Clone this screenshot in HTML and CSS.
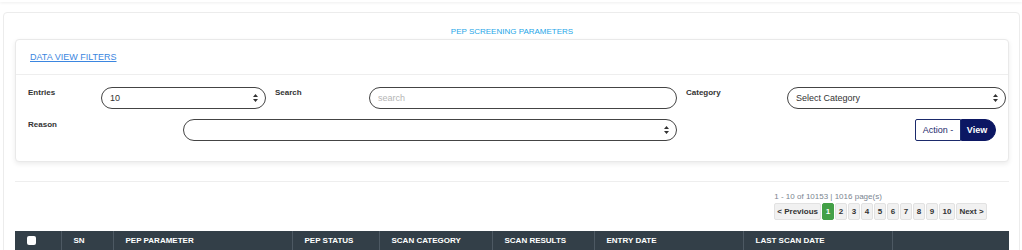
FILE: index.html
```html
<!DOCTYPE html>
<html lang="en">
<head>
    <meta charset="UTF-8">
    <meta name="viewport" content="width=device-width, initial-scale=1.0">
    <title>PEP Screening Parameters</title>
    <link rel="stylesheet" href="styles.css">
</head>
<body>
    <div class="topbar"></div>
    <div class="page">
        <div class="panel">
            <h2 class="panel-title">PEP SCREENING PARAMETERS</h2>

            <div class="filters">
                <div class="filters-head">
                    <a href="#" class="filters-link">DATA VIEW FILTERS</a>
                </div>
                <div class="filters-body">
                    <div class="row row-top">
                        <label class="lbl">Entries</label>
                        <div class="field">
                            <select class="ctl">
                                <option>10</option>
                                <option>25</option>
                                <option>50</option>
                            </select>
                            <svg class="caret" width="5" height="8" viewBox="0 0 5 8"><path d="M0 3 L2.5 0 L5 3 Z M0 5 L2.5 8 L5 5 Z" fill="#333"/></svg>
                        </div>
                        <label class="lbl lbl-pad">Search</label>
                        <div class="field">
                            <input class="ctl" type="text" placeholder="search">
                        </div>
                        <label class="lbl lbl-pad">Category</label>
                        <div class="field">
                            <select class="ctl">
                                <option>Select Category</option>
                            </select>
                            <svg class="caret" width="5" height="8" viewBox="0 0 5 8"><path d="M0 3 L2.5 0 L5 3 Z M0 5 L2.5 8 L5 5 Z" fill="#333"/></svg>
                        </div>
                    </div>
                    <div class="row row-bottom">
                        <label class="lbl">Reason</label>
                        <div class="field">
                            <select class="ctl">
                                <option></option>
                            </select>
                            <svg class="caret" width="5" height="8" viewBox="0 0 5 8"><path d="M0 3 L2.5 0 L5 3 Z M0 5 L2.5 8 L5 5 Z" fill="#333"/></svg>
                        </div>
                        <div></div>
                        <div class="btn-group">
                            <button class="btn-action">Action -</button>
                            <button class="btn-view">View</button>
                        </div>
                    </div>
                </div>
            </div>

            <hr class="divider">

            <div class="pager-wrap">
                <div class="pager">
                    <div class="pager-info">1 - 10 of 10153 | 1016 page(s)</div>
                    <div class="pager-btns">
                        <button class="pg">&lt; Previous</button>
                        <button class="pg active">1</button>
                        <button class="pg">2</button>
                        <button class="pg">3</button>
                        <button class="pg">4</button>
                        <button class="pg">5</button>
                        <button class="pg">6</button>
                        <button class="pg">7</button>
                        <button class="pg">8</button>
                        <button class="pg">9</button>
                        <button class="pg">10</button>
                        <button class="pg">Next &gt;</button>
                    </div>
                </div>
            </div>

            <table class="grid">
                <thead>
                    <tr>
                        <th class="c-check"><span class="chk"></span></th>
                        <th class="c-sn">SN</th>
                        <th class="c-param">PEP PARAMETER</th>
                        <th class="c-status">PEP STATUS</th>
                        <th class="c-cat">SCAN CATEGORY</th>
                        <th class="c-res">SCAN RESULTS</th>
                        <th class="c-entry">ENTRY DATE</th>
                        <th class="c-last">LAST SCAN DATE</th>
                        <th class="c-act"></th>
                    </tr>
                </thead>
            </table>
        </div>
    </div>
</body>
</html>
```

FILE: styles.css
```css
body {
    margin: 0;
    font-family: 'Liberation Sans', Arial, sans-serif;
    background-color: #fff;
    color: #333;
}
.topbar {
    height: 2px;
    background-color: #fff;
    box-shadow: 0 1px 3px rgba(0, 0, 0, 0.08);
}
.page {
    padding: 10px 2px 0 3px;
    height: 238px;
    overflow: hidden;
}
.panel {
    border: 1px solid #ececec;
    border-radius: 4px;
    padding: 0 10px 0 11px;
    height: 300px;
}
.panel-title {
    margin: 0;
    padding: 14px 0 2px;
    font-size: 8px;
    line-height: 10px;
    font-weight: normal;
    text-align: center;
    color: #1ea6e8;
}
.filters {
    border: 1px solid #e9e9e9;
    border-radius: 4px;
    box-shadow: 0 2px 5px rgba(0, 0, 0, 0.08);
    background-color: #fff;
}
.filters-head {
    padding: 11px 15px 11px 14px;
    font-size: 9px;
    line-height: 12px;
    border-bottom: 1px solid #eee;
}
.filters-link {
    font-size: 9px;
    color: #3b86e0;
    text-decoration: underline;
}
.filters-body {
    padding: 12px 2px 20px 12px;
    display: flex;
    flex-direction: column;
    gap: 10px;
}
.row {
    display: grid;
    align-items: start;
}
.row-top {
    grid-template-columns: 73px 165px 103px 308px 110px 1fr;
}
.row-bottom {
    grid-template-columns: 155px 494px 1fr auto;
}
.lbl {
    font-size: 8px;
    font-weight: bold;
    line-height: 10px;
    padding-top: 1px;
    color: #333;
}
.lbl-pad {
    padding-left: 9px;
}
.field {
    position: relative;
    height: 22px;
}
.ctl {
    appearance: none;
    -webkit-appearance: none;
    box-sizing: border-box;
    width: 100%;
    height: 22px;
    border: 1px solid #444;
    border-radius: 11px;
    background-color: #fff;
    padding: 0 20px 0 8px;
    font-family: 'Liberation Sans', Arial, sans-serif;
    font-size: 9px;
    color: #333;
    outline: none;
}
.ctl::placeholder {
    color: #b5b5b5;
}
.caret {
    position: absolute;
    right: 8px;
    top: 7px;
    pointer-events: none;
}
.btn-group {
    display: flex;
    margin-right: 10px;
}
.btn-group button {
    height: 22px;
    font-family: 'Liberation Sans', Arial, sans-serif;
    font-size: 9px;
    cursor: pointer;
}
.btn-action {
    width: 46px;
    padding: 0;
    background-color: #fff;
    color: #1b2a6b;
    border: 1px solid #1b2a6b;
    border-radius: 2px 0 0 2px;
}
.btn-view {
    width: 35px;
    padding: 0 3px 0 0;
    background-color: #0c1763;
    color: #fff;
    font-weight: bold;
    border: 1px solid #0c1763;
    border-radius: 0 11px 11px 0;
}
.divider {
    margin: 19px 0 0 0;
    border: none;
    border-top: 1px solid #eee;
}
.pager-wrap {
    display: flex;
    justify-content: flex-end;
    padding: 10px 22px 0 0;
}
.pager-info {
    font-size: 8px;
    line-height: 10px;
    color: #7a8590;
    margin-bottom: 1px;
}
.pager-btns {
    display: flex;
    gap: 1px;
}
.pg {
    box-sizing: border-box;
    height: 17px;
    min-width: 12px;
    padding: 0 2px;
    font-family: 'Liberation Sans', Arial, sans-serif;
    font-size: 8px;
    font-weight: bold;
    color: #333;
    background-color: #f1f1f1;
    border: 1px solid #e2e2e2;
    border-radius: 2px;
}
.pg:first-child {
    min-width: 46px;
}
.pg:nth-last-child(2) {
    min-width: 16px;
}
.pg:last-child {
    min-width: 31px;
}
.pg.active {
    background-color: #43a047;
    border-color: #43a047;
    color: #fff;
}
.grid {
    margin-top: 11px;
    width: 994px;
    border-collapse: collapse;
    table-layout: fixed;
}
.grid th {
    box-sizing: border-box;
    background-color: #333f48;
    color: #fff;
    font-size: 8px;
    font-weight: bold;
    text-align: left;
    padding: 5px 12px 7px;
    line-height: 10px;
    border-left: 1px solid #4d5963;
    white-space: nowrap;
}
.grid th:first-child {
    border-left: none;
}
.c-check { width: 46px; }
.c-sn { width: 52px; }
.c-param { width: 179px; }
.c-status { width: 87px; }
.c-cat { width: 113px; }
.c-res { width: 102px; }
.c-entry { width: 149px; }
.c-last { width: 149px; }
.chk {
    display: inline-block;
    width: 9px;
    height: 9px;
    border-radius: 2px;
    background-color: #fff;
    vertical-align: middle;
}
```
